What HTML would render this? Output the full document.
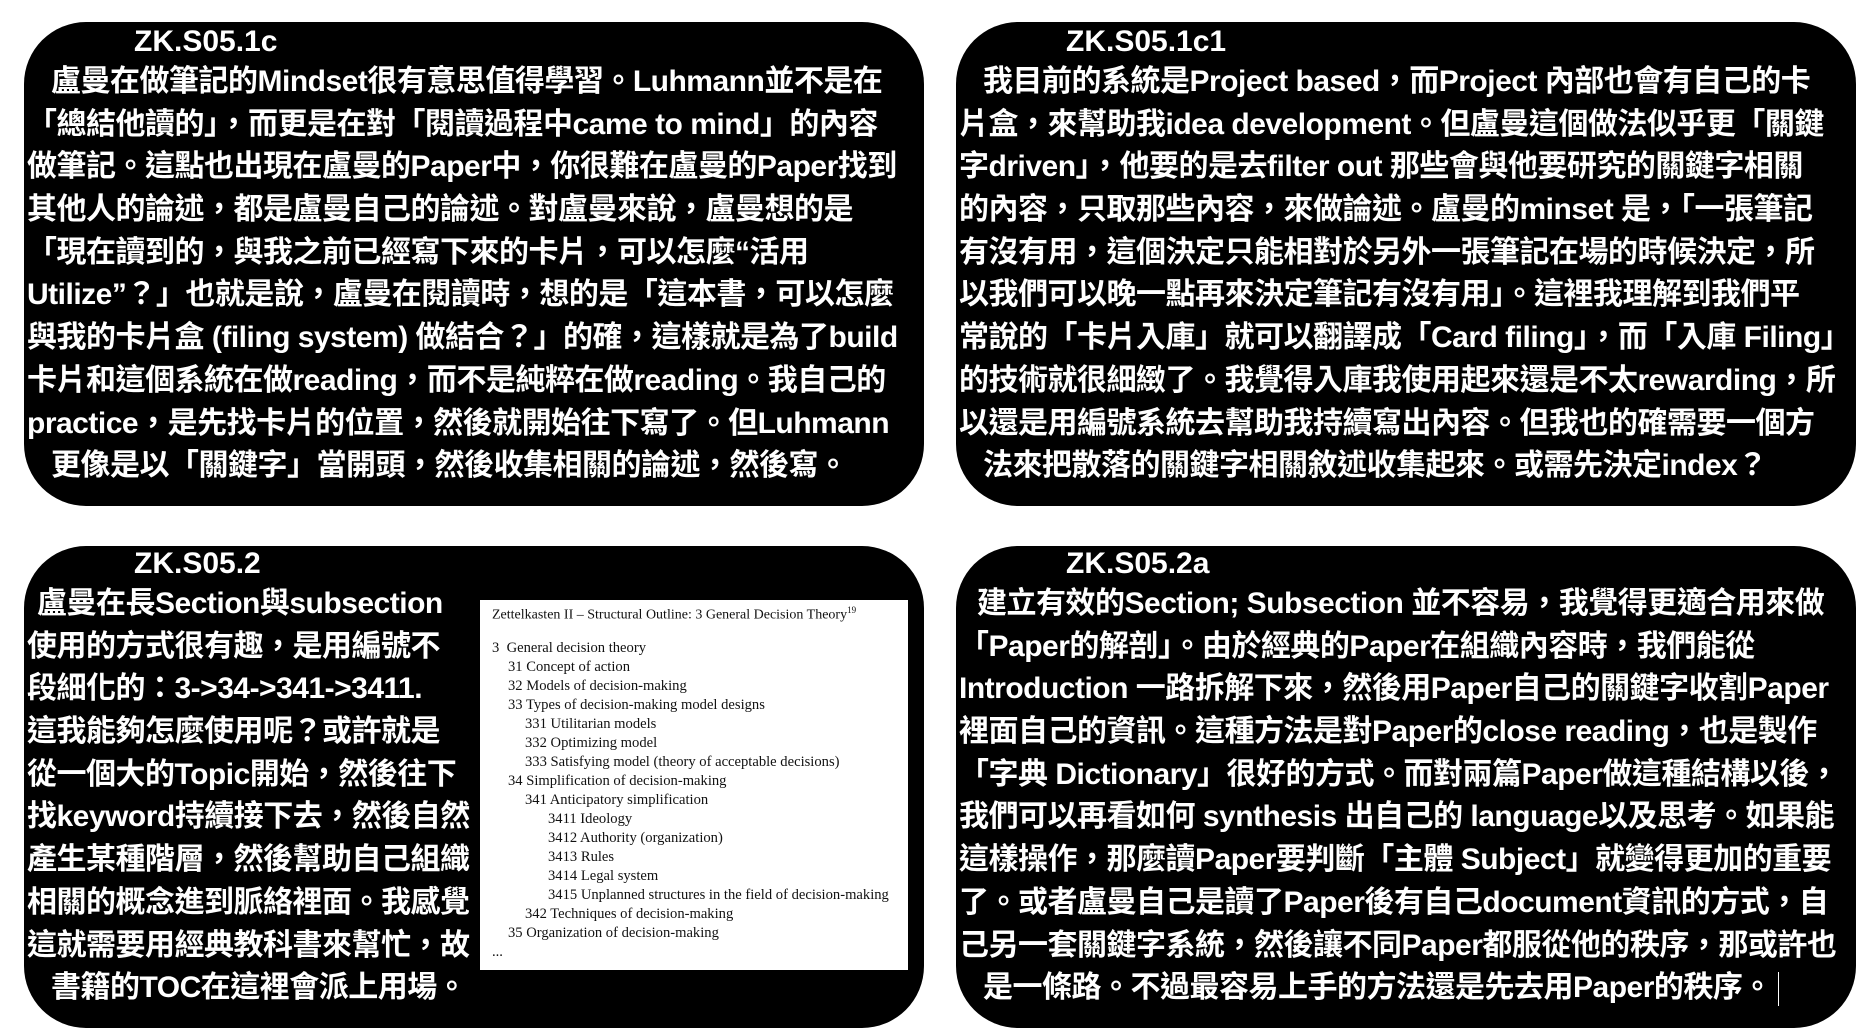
<!DOCTYPE html>
<html><head><meta charset="utf-8"><style>
body{margin:0;width:1872px;height:1036px;background:#fff;position:relative;overflow:hidden;font-family:"Liberation Sans","Noto Sans CJK TC",sans-serif;}
.p{position:absolute;background:#000;border-radius:62px;}
.t{position:absolute;color:#fff;font-weight:bold;font-size:30px;line-height:42px;white-space:nowrap;}
.b{position:absolute;color:#fff;font-weight:bold;font-size:30px;text-align:left;white-space:nowrap;letter-spacing:-0.5px;}
.b div{height:42.7px;line-height:42.7px;}
.b .i{padding-left:24px;}
.img{position:absolute;left:480px;top:600px;width:428px;height:370px;background:#fff;font-family:"Liberation Serif","DejaVu Serif",serif;color:#111;font-size:14.6px;}
.img div{position:absolute;white-space:nowrap;line-height:19px;}
</style></head><body>
<div class="p" style="left:24px;top:22px;width:900px;height:484px"></div>
<div class="p" style="left:956px;top:22px;width:900px;height:484px"></div>
<div class="p" style="left:24px;top:546px;width:900px;height:482px"></div>
<div class="p" style="left:956px;top:546px;width:900px;height:482px"></div>

<div class="t" style="left:134px;top:21px">ZK.S05.1c</div>
<div class="b" style="left:27px;top:61px;width:900px">
<div class="i">盧曼在做筆記的Mindset很有意思值得學習。Luhmann並不是在</div>
<div>「總結他讀的」，而更是在對「閱讀過程中came to mind」的內容</div>
<div>做筆記。這點也出現在盧曼的Paper中，你很難在盧曼的Paper找到</div>
<div>其他人的論述，都是盧曼自己的論述。對盧曼來說，盧曼想的是</div>
<div>「現在讀到的，與我之前已經寫下來的卡片，可以怎麼“活用</div>
<div>Utilize”？」也就是說，盧曼在閱讀時，想的是「這本書，可以怎麼</div>
<div>與我的卡片盒 (filing system) 做結合？」的確，這樣就是為了build</div>
<div>卡片和這個系統在做reading，而不是純粹在做reading。我自己的</div>
<div>practice，是先找卡片的位置，然後就開始往下寫了。但Luhmann</div>
<div class="i">更像是以「關鍵字」當開頭，然後收集相關的論述，然後寫。</div>
</div>

<div class="t" style="left:1066px;top:21px">ZK.S05.1c1</div>
<div class="b" style="left:959px;top:61px;width:900px">
<div class="i">我目前的系統是Project based，而Project 內部也會有自己的卡</div>
<div>片盒，來幫助我idea development。但盧曼這個做法似乎更「關鍵</div>
<div>字driven」，他要的是去filter out 那些會與他要研究的關鍵字相關</div>
<div>的內容，只取那些內容，來做論述。盧曼的minset 是，「一張筆記</div>
<div>有沒有用，這個決定只能相對於另外一張筆記在場的時候決定，所</div>
<div>以我們可以晚一點再來決定筆記有沒有用」。這裡我理解到我們平</div>
<div>常說的「卡片入庫」就可以翻譯成「Card filing」，而「入庫 Filing」</div>
<div>的技術就很細緻了。我覺得入庫我使用起來還是不太rewarding，所</div>
<div>以還是用編號系統去幫助我持續寫出內容。但我也的確需要一個方</div>
<div class="i">法來把散落的關鍵字相關敘述收集起來。或需先決定index？</div>
</div>

<div class="t" style="left:134px;top:543px">ZK.S05.2</div>
<div class="b" style="left:27px;top:583px;width:452px">
<div class="i" style="padding-left:10px">盧曼在長Section與subsection</div>
<div>使用的方式很有趣，是用編號不</div>
<div>段細化的：3-&gt;34-&gt;341-&gt;3411.</div>
<div>這我能夠怎麼使用呢？或許就是</div>
<div>從一個大的Topic開始，然後往下</div>
<div>找keyword持續接下去，然後自然</div>
<div>產生某種階層，然後幫助自己組織</div>
<div>相關的概念進到脈絡裡面。我感覺</div>
<div>這就需要用經典教科書來幫忙，故</div>
<div class="i">書籍的TOC在這裡會派上用場。</div>
</div>
<div class="img">
<div style="left:12px;top:1px;font-size:14px">Zettelkasten II – Structural Outline: 3 General Decision Theory<sup style="font-size:9px">19</sup></div>
<div style="left:12px;top:39px">3&nbsp; General decision theory</div>
<div style="left:28px;top:58px">31 Concept of action</div>
<div style="left:28px;top:77px">32 Models of decision-making</div>
<div style="left:28px;top:96px">33 Types of decision-making model designs</div>
<div style="left:45px;top:115px">331 Utilitarian models</div>
<div style="left:45px;top:134px">332 Optimizing model</div>
<div style="left:45px;top:153px">333 Satisfying model (theory of acceptable decisions)</div>
<div style="left:28px;top:172px">34 Simplification of decision-making</div>
<div style="left:45px;top:191px">341 Anticipatory simplification</div>
<div style="left:68px;top:210px">3411 Ideology</div>
<div style="left:68px;top:229px">3412 Authority (organization)</div>
<div style="left:68px;top:248px">3413 Rules</div>
<div style="left:68px;top:267px">3414 Legal system</div>
<div style="left:68px;top:286px">3415 Unplanned structures in the field of decision-making</div>
<div style="left:45px;top:305px">342 Techniques of decision-making</div>
<div style="left:28px;top:324px">35 Organization of decision-making</div>
<div style="left:12px;top:343px">...</div>
</div>

<div class="t" style="left:1066px;top:543px">ZK.S05.2a</div>
<div class="b" style="left:959px;top:583px;width:900px">
<div class="i" style="padding-left:18px">建立有效的Section; Subsection 並不容易，我覺得更適合用來做</div>
<div>「Paper的解剖」。由於經典的Paper在組織內容時，我們能從</div>
<div>Introduction 一路拆解下來，然後用Paper自己的關鍵字收割Paper</div>
<div>裡面自己的資訊。這種方法是對Paper的close reading，也是製作</div>
<div>「字典 Dictionary」很好的方式。而對兩篇Paper做這種結構以後，</div>
<div>我們可以再看如何 synthesis 出自己的 language以及思考。如果能</div>
<div>這樣操作，那麼讀Paper要判斷「主體 Subject」就變得更加的重要</div>
<div>了。或者盧曼自己是讀了Paper後有自己document資訊的方式，自</div>
<div>己另一套關鍵字系統，然後讓不同Paper都服從他的秩序，那或許也</div>
<div class="i">是一條路。不過最容易上手的方法還是先去用Paper的秩序。<span style="display:inline-block;width:1px;height:34px;background:#fff;vertical-align:middle;margin-left:6px"></span></div>
</div>
</body></html>
